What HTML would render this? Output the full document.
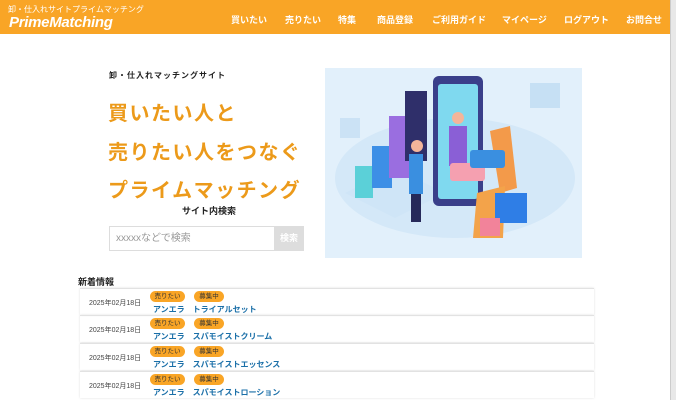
<!DOCTYPE html>
<html><head><meta charset="utf-8"><style>
*{margin:0;padding:0;box-sizing:border-box}
body{width:676px;height:400px;overflow:hidden;background:#fff;font-family:"Liberation Sans","Noto Sans CJK JP",sans-serif;position:relative}
.hd{position:absolute;left:0;top:0;width:670px;height:34px;background:#f9a526;color:#fff}
.sub{position:absolute;left:8px;top:4px;font-size:8px}
.logo{position:absolute;left:9px;top:14px;font-size:15px;font-weight:bold;font-style:italic;letter-spacing:-0.3px}
.nav{position:absolute;top:13px;font-size:9px;font-weight:bold}
.sb{position:absolute;right:0;top:0;width:6px;height:400px;background:#e8e8e8;border-left:1px solid #ccc}
.t1{position:absolute;left:109px;top:70px;font-size:8px;font-weight:bold;color:#222;letter-spacing:1px}
.big{position:absolute;left:108px;font-size:20px;font-weight:bold;color:#ec9a1a;letter-spacing:1.5px}
.st{position:absolute;left:182px;top:204px;font-size:9px;font-weight:bold;color:#222}
.inp{position:absolute;left:109px;top:226px;width:166px;height:25px;border:1px solid #ddd;font-size:10px;color:#999;padding:0 6px;line-height:23px}
.btn{position:absolute;left:274px;top:226px;width:30px;height:25px;background:#ddd;color:#fff;font-size:9px;font-weight:bold;text-align:center;line-height:25px}
.h2{position:absolute;left:78px;top:275px;font-size:9px;font-weight:bold;color:#222}
.row{position:absolute;left:80px;width:514px;height:27px;border-top:1px solid #e2e2e2;box-shadow:0 0 2px #ddd}
.d{position:absolute;left:9px;top:9px;font-size:7px;color:#444}
.b{position:absolute;top:2px;height:11px;border-radius:6px;background:#f9a526;color:#333;font-size:6.5px;text-align:center;line-height:11px}
.l{position:absolute;left:73px;top:15px;font-size:8px;color:#1a6fa8;font-weight:bold}
</style></head><body>
<div class="hd">
<div class="sub">卸・仕入れサイトプライムマッチング</div>
<div class="logo">PrimeMatching</div>
<div class="nav" style="left:231px">買いたい</div>
<div class="nav" style="left:285px">売りたい</div>
<div class="nav" style="left:338px">特集</div>
<div class="nav" style="left:377px">商品登録</div>
<div class="nav" style="left:432px">ご利用ガイド</div>
<div class="nav" style="left:502px">マイページ</div>
<div class="nav" style="left:564px">ログアウト</div>
<div class="nav" style="left:626px">お問合せ</div>
</div>
<div class="sb"></div>
<div class="t1">卸・仕入れマッチングサイト</div>
<div class="big" style="top:97px">買いたい人と</div>
<div class="big" style="top:136px">売りたい人をつなぐ</div>
<div class="big" style="top:174px">プライムマッチング</div>
<div class="st">サイト内検索</div>
<div class="inp">xxxxxなどで検索</div>
<div class="btn">検索</div>
<svg style="position:absolute;left:325px;top:68px" width="257" height="190" viewBox="0 0 257 190">
<rect width="257" height="190" fill="#e2f0fb"/>
<ellipse cx="130" cy="110" rx="120" ry="60" fill="#d4e8f8"/>
<polygon points="20,125 70,100 120,125 70,150" fill="#cfe5f7"/>
<rect x="30" y="98" width="18" height="32" fill="#5bd0d8"/>
<rect x="47" y="78" width="20" height="42" fill="#3d8fe6"/>
<rect x="64" y="48" width="20" height="62" fill="#9a6ee0"/>
<rect x="80" y="23" width="22" height="70" fill="#2f2f6a"/>
<rect x="108" y="8" width="50" height="130" rx="6" fill="#3a3f8a"/>
<rect x="113" y="16" width="40" height="115" rx="3" fill="#7fd9ef"/>
<circle cx="133" cy="50" r="6" fill="#f4b59a"/>
<path d="M124 58h18v40h-18z" fill="#8a5fd6"/>
<circle cx="92" cy="78" r="6" fill="#f4b59a"/>
<path d="M84 86h14v40h-14z" fill="#3a8fe0"/>
<path d="M86 126h10v28h-10z" fill="#26295a"/>
<polygon points="165,63 185,58 192,120 175,125" fill="#f39a4a"/>
<polygon points="152,125 180,118 178,170 148,170" fill="#f3a34a"/>
<rect x="170" y="125" width="32" height="30" fill="#2f7ee6"/>
<rect x="155" y="150" width="20" height="18" fill="#f2839a"/>
<rect x="125" y="95" width="35" height="18" rx="3" fill="#f5a0b0"/>
<rect x="145" y="82" width="35" height="18" rx="3" fill="#3a8fe0"/>
<rect x="205" y="15" width="30" height="25" fill="#c6e0f4"/>
<rect x="15" y="50" width="20" height="20" fill="#cbe2f5"/>
</svg>
<div class="h2">新着情報</div>
<div class="row" style="top:288px"><div class="d">2025年02月18日</div><div class="b" style="left:70px;width:35px">売りたい</div><div class="b" style="left:114px;width:30px">募集中</div><div class="l">アンエラ　トライアルセット</div></div>
<div class="row" style="top:315px"><div class="d">2025年02月18日</div><div class="b" style="left:70px;width:35px">売りたい</div><div class="b" style="left:114px;width:30px">募集中</div><div class="l">アンエラ　スパモイストクリーム</div></div>
<div class="row" style="top:343px"><div class="d">2025年02月18日</div><div class="b" style="left:70px;width:35px">売りたい</div><div class="b" style="left:114px;width:30px">募集中</div><div class="l">アンエラ　スパモイストエッセンス</div></div>
<div class="row" style="top:371px"><div class="d">2025年02月18日</div><div class="b" style="left:70px;width:35px">売りたい</div><div class="b" style="left:114px;width:30px">募集中</div><div class="l">アンエラ　スパモイストローション</div></div>
</body></html>
